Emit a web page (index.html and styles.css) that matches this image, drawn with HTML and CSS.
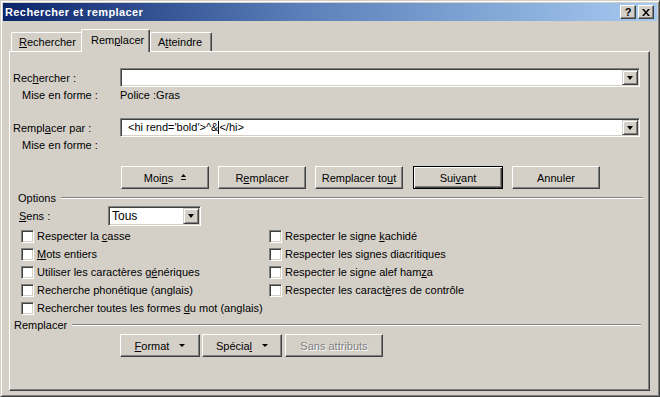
FILE: index.html
```html
<!DOCTYPE html>
<html lang="fr">
<head>
    <meta charset="UTF-8">
    <title>Rechercher et remplacer</title>
    <link rel="stylesheet" href="styles.css">
</head>
<body>
    <div class="window">
        <div class="titlebar">
            <span class="title">Rechercher et remplacer</span>
            <div class="caption-buttons">
                <span class="cap-btn help">?</span>
                <span class="cap-btn">
                    <svg width="8" height="7" viewBox="0 0 8 7"><path d="M0 0h2l2 2.5L6 0h2L5 3.5 8 7H6L4 4.5 2 7H0l3-3.5z" fill="#000"/></svg>
                </span>
            </div>
        </div>

        <div class="tabs">
            <div class="tab first"><u>R</u>echercher</div>
            <div class="tab active">Rem<u>p</u>lacer</div>
            <div class="tab">A<u>t</u>teindre</div>
        </div>

        <div class="panel">
            <div class="field">
                <label class="field-label">Rec<u>h</u>ercher :</label>
                <div class="combo">
                    <span class="combo-text"></span>
                    <span class="drop-btn"><i class="arrow"></i></span>
                </div>
            </div>
            <div class="subfield">
                <span class="sub-label">Mise en forme :</span>
                <span class="sub-value">Police :Gras</span>
            </div>

            <div class="field second">
                <label class="field-label">Rempl<u>a</u>cer par :</label>
                <div class="combo">
                    <span class="combo-text">&lt;hi rend='bold'&gt;^&amp;<span class="caret"></span>&lt;/hi&gt;</span>
                    <span class="drop-btn"><i class="arrow"></i></span>
                </div>
            </div>
            <div class="subfield">
                <span class="sub-label">Mise en forme :</span>
            </div>

            <div class="actions">
                <button class="btn"><span>Moi<u>n</u>s</span>
                    <svg class="less-icon" width="5" height="6" viewBox="0 0 5 6"><path d="M2.5 0L5 3H0z M0 5h5v1H0z" fill="#000"/></svg>
                </button>
                <button class="btn"><span>R<u>e</u>mplacer</span></button>
                <button class="btn"><span>Remplacer to<u>u</u>t</span></button>
                <button class="btn default"><span>Sui<u>v</u>ant</span></button>
                <button class="btn"><span>Annuler</span></button>
            </div>

            <div class="group-title options-title">
                <span>Options</span>
                <span class="etched"></span>
            </div>

            <div class="sens-row">
                <span class="sens-label"><u>S</u>ens :</span>
                <div class="select">
                    <span class="select-text">Tous</span>
                    <span class="drop-btn"><i class="arrow"></i></span>
                </div>
            </div>

            <div class="checks">
                <div class="check"><span class="box"></span><span>Respecter la <u>c</u>asse</span></div>
                <div class="check"><span class="box"></span><span>Respecter le signe <u>k</u>achidé</span></div>
                <div class="check"><span class="box"></span><span><u>M</u>ots entiers</span></div>
                <div class="check"><span class="box"></span><span>Respecter les si<u>g</u>nes diacritiques</span></div>
                <div class="check"><span class="box"></span><span>Utiliser les caractères g<u>é</u>nériques</span></div>
                <div class="check"><span class="box"></span><span>Respecter le signe alef ham<u>z</u>a</span></div>
                <div class="check"><span class="box"></span><span>Recherche phonétique (anglais)</span></div>
                <div class="check"><span class="box"></span><span>Respecter les caract<u>è</u>res de contrôle</span></div>
                <div class="check"><span class="box"></span><span>Rechercher toutes les formes <u>d</u>u mot (anglais)</span></div>
            </div>

            <div class="group-title replace-title">
                <span>Remplacer</span>
                <span class="etched"></span>
            </div>

            <div class="format-row">
                <button class="btn small"><span><u>F</u>ormat</span><i class="mini-arrow"></i></button>
                <button class="btn small"><span>Spécia<u>l</u></span><i class="mini-arrow"></i></button>
                <button class="btn wide disabled"><span>Sans attributs</span></button>
            </div>
        </div>
    </div>
</body>
</html>
```

FILE: styles.css
```css
body {
    margin: 0;
    background: #d4d0c8;
    font-family: "Liberation Sans", Arial, sans-serif;
    font-size: 11px;
    color: #000;
}

u {
    text-decoration: underline;
    text-underline-offset: 1px;
}

/* cadre de la fenêtre */
.window {
    width: 660px;
    height: 397px;
    box-sizing: border-box;
    padding: 2px;
    background: #d4d0c8;
    border: 1px solid;
    border-color: #d4d0c8 #404040 #404040 #d4d0c8;
    box-shadow: inset 1px 1px #fff, inset -1px -1px #808080;
}

.titlebar {
    height: 18px;
    display: flex;
    align-items: center;
    justify-content: space-between;
    padding: 0 3px 0 2px;
    background: linear-gradient(to right, #0a246a 0%, #5a7eb8 45%, #a6caf0 100%);
}

.title {
    color: #fff;
    font-weight: bold;
    font-size: 11px;
    letter-spacing: 0.4px;
}

.caption-buttons {
    display: flex;
    gap: 2px;
}

.cap-btn {
    width: 16px;
    height: 14px;
    box-sizing: border-box;
    display: flex;
    align-items: center;
    justify-content: center;
    background: #d4d0c8;
    border: 1px solid;
    border-color: #fff #404040 #404040 #fff;
    box-shadow: inset -1px -1px #808080;
    font-weight: bold;
    font-size: 11px;
}

/* onglets */
.tabs {
    display: flex;
    align-items: flex-end;
    height: 22px;
    margin: 8px 0 0 8px;
}

.tab {
    height: 19px;
    box-sizing: border-box;
    padding: 3px 0 0 7px;
    border: 1px solid;
    border-bottom: none;
    border-color: #fff #404040 #404040 #fff;
    border-radius: 2px 2px 0 0;
    box-shadow: inset -1px 0 #808080;
    background: #d4d0c8;
}

.tab.first {
    width: 72px;
}

.tab.active {
    width: 69px;
    height: 23px;
    margin: 0 0 -1px -2px;
    padding: 4px 0 0 9px;
    position: relative;
    z-index: 2;
}

.tab:last-child {
    width: 62px;
}

/* panneau */
.panel {
    margin-left: 6px;
    width: 641px;
    height: 340px;
    box-sizing: border-box;
    padding: 0 9px 0 3px;
    border: 1px solid;
    border-color: #fff #404040 #404040 #fff;
    box-shadow: inset -1px -1px #808080;
    position: relative;
    z-index: 1;
}

.field {
    display: flex;
    align-items: center;
    margin-top: 16px;
    height: 19px;
}

.field.second {
    margin-top: 15px;
}

.field-label {
    width: 107px;
}

.combo,
.select {
    height: 19px;
    box-sizing: border-box;
    display: flex;
    align-items: center;
    justify-content: space-between;
    background: #fff;
    border: 1px solid;
    border-color: #808080 #fff #fff #808080;
    box-shadow: inset 1px 1px #404040, inset -1px -1px #d4d0c8;
    padding: 1px;
}

.combo {
    width: 520px;
}

.combo-text,
.select-text {
    padding-left: 6px;
    white-space: pre;
}

.caret {
    display: inline-block;
    width: 1px;
    height: 13px;
    background: #000;
    vertical-align: -3px;
}

.drop-btn {
    width: 16px;
    height: 15px;
    box-sizing: border-box;
    display: flex;
    align-items: center;
    justify-content: center;
    background: #d4d0c8;
    border: 1px solid;
    border-color: #d4d0c8 #404040 #404040 #d4d0c8;
    box-shadow: inset 1px 1px #fff, inset -1px -1px #808080;
}

.arrow {
    width: 0;
    height: 0;
    border-left: 3.5px solid transparent;
    border-right: 3.5px solid transparent;
    border-top: 4px solid #000;
}

.subfield {
    display: flex;
    align-items: center;
    height: 16px;
}

.sub-label {
    width: 98px;
    padding-left: 9px;
}

.actions {
    display: flex;
    gap: 9px;
    margin: 13px 0 0 108px;
}

.btn {
    font-family: inherit;
    font-size: 11px;
    color: #000;
    width: 88px;
    height: 23px;
    padding: 0;
    display: flex;
    align-items: center;
    justify-content: center;
    gap: 8px;
    white-space: nowrap;
    background: #d4d0c8;
    border: 1px solid;
    border-color: #fff #404040 #404040 #fff;
    box-shadow: inset -1px -1px #808080;
}

.btn.default {
    width: 90px;
    margin-left: 1px;
    border-color: #000;
    box-shadow: inset 1px 1px #fff, inset -1px -1px #404040, inset -2px -2px #808080;
}

.less-icon {
    margin-top: -1px;
}

.group-title {
    display: flex;
    align-items: center;
    height: 14px;
}

.etched {
    flex: 1;
    height: 0;
    border-top: 1px solid #808080;
    border-bottom: 1px solid #fff;
    margin-left: 5px;
}

.options-title {
    margin: 2px -3px 0 0;
    padding-left: 5px;
}

.replace-title {
    margin: 1px -1px 0 0;
    padding-left: 1px;
}

.sens-row {
    display: flex;
    align-items: center;
    height: 22px;
}

.sens-label {
    width: 89px;
    padding-left: 6px;
}

.select {
    width: 93px;
    height: 20px;
}

.select .drop-btn {
    height: 16px;
}

.select-text {
    padding-left: 2px;
    font-size: 12px;
}

.checks {
    display: grid;
    grid-template-columns: 248px 1fr;
    grid-auto-rows: 18px;
    margin-left: 8px;
}

.check {
    display: flex;
    align-items: center;
    white-space: nowrap;
}

.box {
    width: 13px;
    height: 13px;
    box-sizing: border-box;
    margin-right: 3px;
    background: #fff;
    border: 1px solid;
    border-color: #808080 #fff #fff #808080;
    box-shadow: inset 1px 1px #404040, inset -1px -1px #d4d0c8;
}

.format-row {
    display: flex;
    gap: 2px;
    margin: 2px 0 0 107px;
}

.btn.small {
    width: 80px;
    gap: 10px;
}

.btn.wide {
    width: 98px;
    margin-left: 1px;
}

.btn.disabled {
    color: #808080;
    text-shadow: 1px 1px #fff;
}

.mini-arrow {
    width: 0;
    height: 0;
    border-left: 3px solid transparent;
    border-right: 3px solid transparent;
    border-top: 3px solid #000;
}
```
